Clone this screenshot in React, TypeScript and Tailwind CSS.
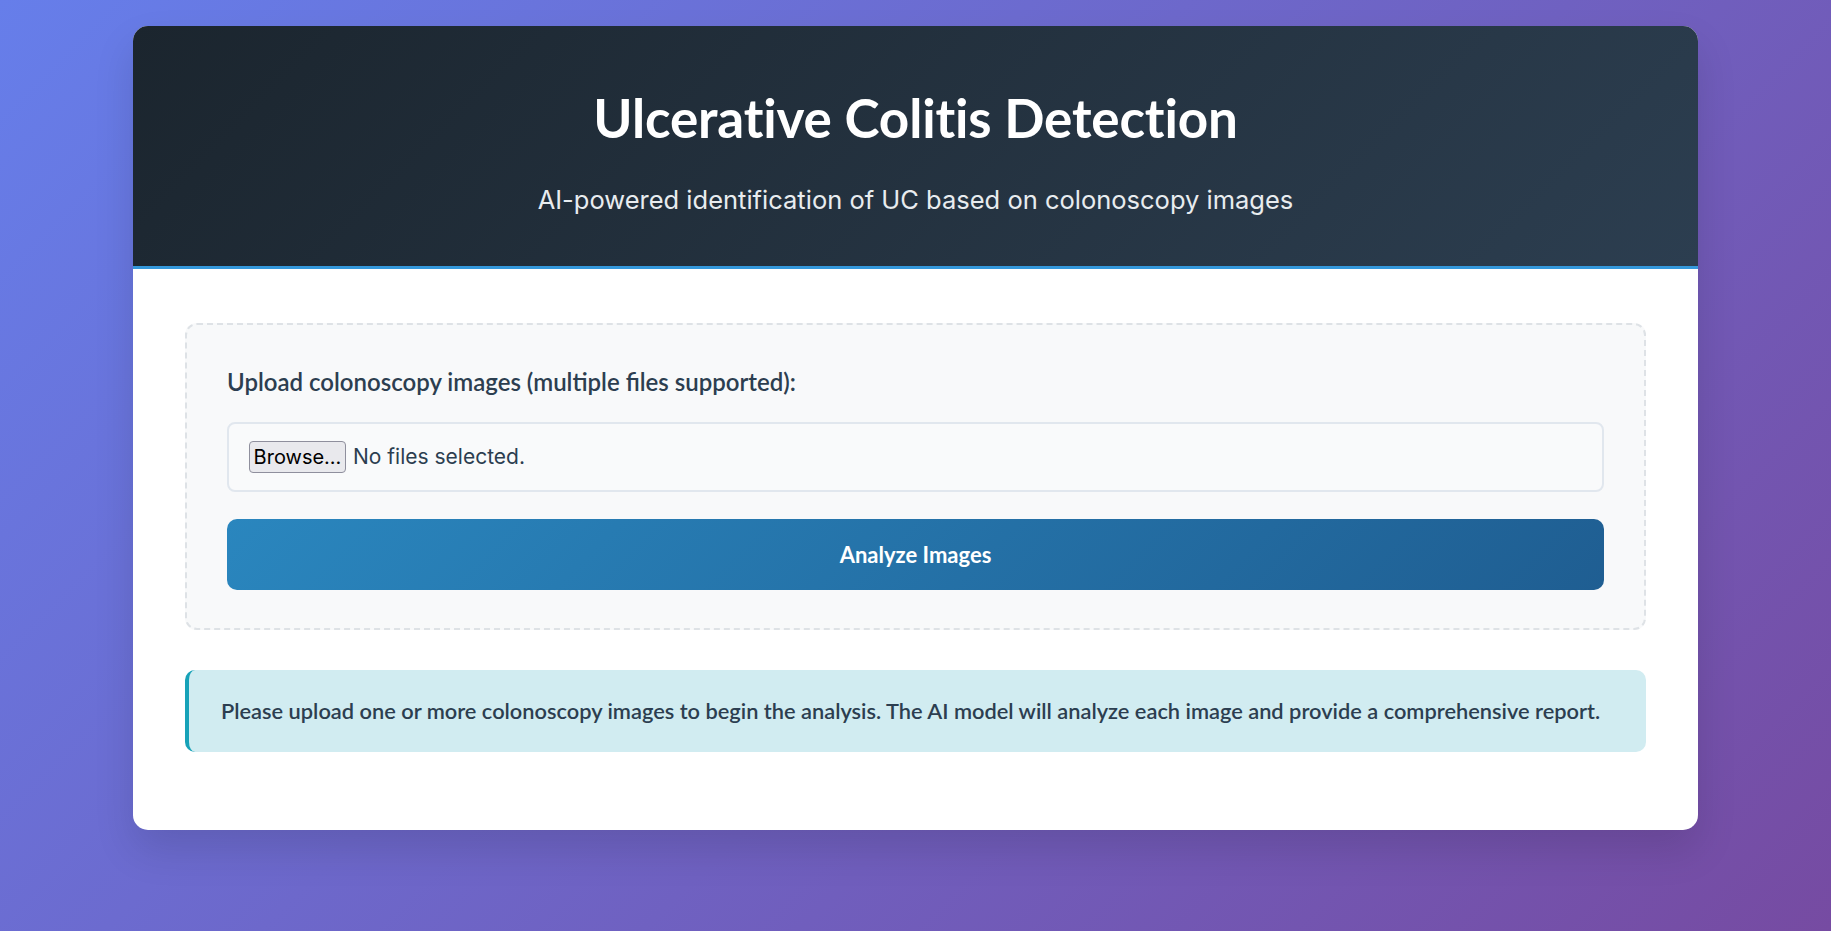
import React from "react";

export default function App() {
  return (
    <div className="min-h-screen w-full bg-[linear-gradient(135deg,#667eea_0%,#764ba2_100%)] pt-[26px] pb-[40px]">
      <div className="mx-auto w-[1565px] overflow-hidden rounded-[15px] bg-white shadow-[0_20px_40px_rgba(0,0,0,0.12)]">
        <header className="border-b-[3px] border-[#3498db] bg-[linear-gradient(135deg,#1b252e_0%,#2c3e50_100%)] pt-[59px] pb-[51px] text-center">
          <h1 className="font-['Lato',sans-serif] text-[53px] font-bold leading-[65px] tracking-[-0.15px] text-white">
            Ulcerative Colitis Detection
          </h1>
          <p className="mt-[35px] font-['Inter',sans-serif] text-[25.5px] leading-[30px] text-[#e8ecef]">
            AI-powered identification of UC based on colonoscopy images
          </p>
        </header>
        <main className="px-[52px] pt-[54px] pb-[78px]">
          <section className="rounded-[12px] border-2 border-dashed border-[#dee2e6] bg-[#f8f9fa] px-[40px] pt-[41px] pb-[38px]">
            <label className="block font-['Lato',sans-serif] text-[24px] font-semibold leading-[32px] text-[#2c3e50]">
              Upload colonoscopy images (multiple files supported):
            </label>
            <div className="mt-[24px] flex h-[70px] items-center rounded-[8px] border-2 border-[#e1e7ee] bg-[#f9fafb] px-[20px]">
              <span className="flex h-[32px] w-[97px] items-center justify-center rounded-[4px] border border-[#8f8f9d] bg-[#e9e9ed] font-['Inter',sans-serif] text-[20px] text-black">
                Browse...
              </span>
              <span className="ml-[7px] font-['Inter',sans-serif] text-[21px] text-[#2c3e50]">
                No files selected.
              </span>
            </div>
            <button className="mt-[27px] flex h-[71px] w-full items-center justify-center rounded-[10px] bg-[linear-gradient(135deg,#2a86be_0%,#1f5e92_100%)] font-['Lato',sans-serif] text-[22px] font-bold text-white">
              Analyze Images
            </button>
          </section>
          <div className="mt-[40px] flex h-[82px] items-center rounded-[10px] border-l-4 border-[#17a2b8] bg-[#d1ecf1] pl-[32px]">
            <p className="font-['Lato',sans-serif] text-[21.8px] font-semibold text-[#2c3e50]">
              Please upload one or more colonoscopy images to begin the analysis. The AI model will analyze each image and provide a comprehensive report.
            </p>
          </div>
        </main>
      </div>
    </div>
  );
}
